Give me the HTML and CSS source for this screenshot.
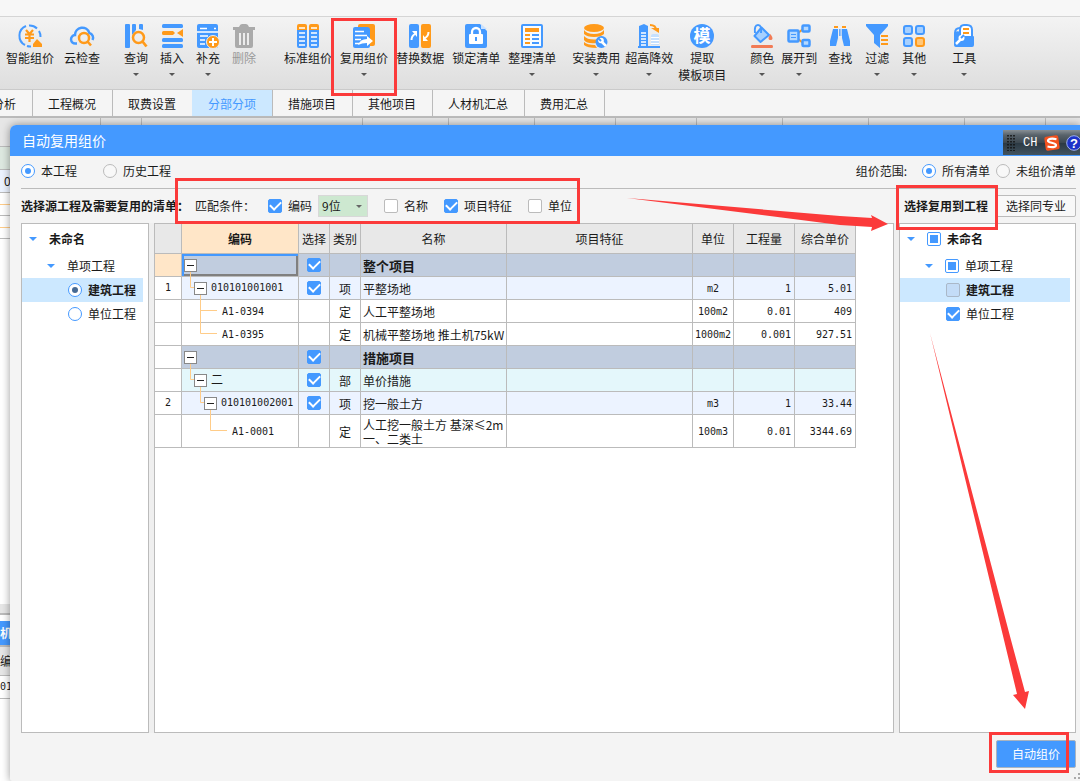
FILE: index.html
```html
<!DOCTYPE html>
<html lang="zh-CN">
<head>
<meta charset="utf-8">
<title>自动复用组价</title>
<link rel="stylesheet" href="styles.css">
</head>
<body>
<div class="app">
  <div class="topstrip"></div>
  <nav class="toolbar" aria-label="工具栏">
    <div class="group g-first">
      <button class="tool"><svg class="icon" viewBox="0 0 24 24"><g fill="none" stroke="#4499ff" stroke-width="2"><path d="M7 21a10.500 10.500 0 0 1 1-19"/><path d="M11 1.500a10.500 10.500 0 0 1 8 3"/><path d="M21 7a10.500 10.500 0 0 1 1.500 6"/><path d="M9 22a11 11 0 0 0 4 .5"/></g><path fill="none" stroke="#ff9a1a" stroke-width="2.200" d="M8 6l3.500 4L15 6M7 10.500h9M7 14h9M11.500 10v8"/><path fill="#ff9a1a" d="M19 15l5 5v3h-9v-3z"/></svg><span>智能组价</span></button>
      <button class="tool"><svg class="icon" viewBox="0 0 24 24"><path fill="none" stroke="#4499ff" stroke-width="2.500" d="M7 19.500H5.500a4.200 4.200 0 0 1-.5-8.400A7.300 7.300 0 0 1 19.300 9a4.800 4.800 0 0 1 3.200 7"/><circle cx="14" cy="14" r="5" fill="none" stroke="#ff9a1a" stroke-width="2.500"/><path stroke="#ff9a1a" stroke-width="2.500" d="M17.500 17.500l3.500 4"/></svg><span>云检查</span></button>
    </div>
    <div class="group g-edit">
      <button class="tool has-menu"><svg class="icon" viewBox="0 0 24 24"><path fill="#4499ff" d="M1 1q0-1 1-1h3q1 0 1 1v22q0 1-1 1H2q-1 0-1-1zM8 1q0-1 1-1h2q1 0 1 1v5l-4 5zM15 1q0-1 1-1h2q1 0 1 1v5l-4-1z"/><circle cx="14.500" cy="13.500" r="5.500" fill="none" stroke="#ff9a1a" stroke-width="2.500"/><path stroke="#ff9a1a" stroke-width="2.800" d="M18.500 17.500l4 5"/></svg><span>查询</span></button>
      <button class="tool has-menu"><svg class="icon" viewBox="0 0 24 24"><g fill="#4499ff"><rect x="2" width="21" height="4" rx="1.500"/><rect x="2" y="14" width="21" height="4" rx="1.500"/><rect x="2" y="20" width="21" height="4" rx="1.500"/></g><path fill="#ff9a1a" d="M2 8.500Q2 7 3.500 7H13l2 2-2 2H3.500Q2 11 2 9.500zM17 9l6-4v8z"/></svg><span>插入</span></button>
      <button class="tool has-menu"><svg class="icon" viewBox="0 0 24 24"><rect x="1" width="21" height="24" rx="2" fill="#4499ff"/><path stroke="#fff" stroke-width="1.500" d="M4 4.500h7M1 8h21M4 12h8M4 16h5M4 20h5"/><path stroke="#fff" stroke-width="1.500" d="M18 4.500h2"/><circle cx="17" cy="18" r="6.500" fill="#ff9a1a" stroke="#eee"/><path stroke="#fff" stroke-width="2" d="M13 18h8M17 14v8"/></svg><span>补充</span></button>
      <button class="tool" disabled><svg class="icon" viewBox="0 0 24 24"><path fill="#aaa" d="M1 3h6q1-3 3-3h4q2 0 3 3h6v3H1zM3 6h18v16q0 2-2 2H5q-2 0-2-2z"/><path fill="none" stroke="#ececec" stroke-width="2" d="M8 9v12M12 9v12M16 9v12"/></svg><span>删除</span></button>
    </div>
    <div class="group g-price">
      <button class="tool"><svg class="icon" viewBox="0 0 24 24"><path fill="#ff9a1a" d="M1 2q0-2 2-2h6q2 0 2 2v4H1zM13 2q0-2 2-2h6q2 0 2 2v4H13z"/><path fill="#4499ff" d="M1 6h10v16q0 2-2 2H3q-2 0-2-2zM13 6h10v16q0 2-2 2h-6q-2 0-2-2z"/><path stroke="#fff" stroke-width="1.500" d="M3 4h6M15 4h6M3 9h6M15 9h6M3 13h6M15 13h6M3 17h6M15 17h6M3 21h6M15 21h6"/></svg><span>标准组价</span></button>
      <button class="tool has-menu"><svg class="icon" viewBox="0 0 24 24"><rect x="6" width="17" height="22" rx="2" fill="#ff9a1a"/><path fill="#4499ff" d="M1 5q0-2 2-2h12q3 0 3 3v16q0 2-2 2H3q-2 0-2-2z"/><path stroke="#fff" stroke-width="1.700" d="M3 7.500h9M3 11.500h12M3 15.500h6M3 19.500h4"/><path fill="#fff" d="M6 21q2-6 9-6v-3l6 5-6 5v-3q-5 0-9 2z"/></svg><span>复用组价</span></button>
      <button class="tool"><svg class="icon" viewBox="0 0 24 24"><rect x="1" width="10" height="24" rx="2" fill="#4499ff"/><rect x="13" width="10" height="24" rx="2" fill="#ff9a1a"/><path fill="none" stroke="#fff" stroke-width="2" d="M3.500 16q0-4 3.500-6M20.500 8q0 4-3.500 6"/><path fill="#fff" d="M4 7h5v6zM20 17h-5v-6z"/></svg><span>替换数据</span></button>
      <button class="tool"><svg class="icon" viewBox="0 0 24 24"><path fill="#4499ff" d="M1 2q0-2 2-2h13l7 7v15q0 2-2 2H3q-2 0-2-2z"/><path fill="#c9e1ff" d="M17 0l6 5h-6z"/><rect x="5" y="10" width="14" height="10" rx="1" fill="#fff"/><path fill="none" stroke="#fff" stroke-width="2.300" d="M8 11V8a4 4 0 0 1 8 0v3"/><path stroke="#4499ff" stroke-width="2" d="M12 13v4"/></svg><span>锁定清单</span></button>
      <button class="tool has-menu"><svg class="icon" viewBox="0 0 24 24"><rect x="2" y="1" width="20" height="22" rx="1" fill="#f6fbff" stroke="#4499ff" stroke-width="2"/><path fill="#ff9a1a" d="M5 4h14v4H5z"/><path stroke="#ff9a1a" stroke-width="2" d="M5 11h5M5 15h5M5 19h5"/><path stroke="#4499ff" stroke-width="2" d="M12 11h7M12 15h7M12 19h7"/></svg><span>整理清单</span></button>
    </div>
    <div class="group g-fee">
      <button class="tool has-menu"><svg class="icon" viewBox="0 0 24 24"><g fill="#ff9a1a"><ellipse cx="10" cy="4" rx="10" ry="4"/><path d="M0 6q3 4 10 4t10-4v4q-3 3-10 3T0 10zM0 12q3 3.500 10 3.500 2 0 3-.5l-1 4q-9 1-12-3zM0 18q3 3 11 3l2 3Q3 24 0 21z"/></g><circle cx="17.500" cy="18" r="6" fill="#4499ff"/><path stroke="#fff" stroke-width="2.500" d="M17 17l5 5"/><circle cx="17" cy="16.500" r="2.800" fill="#fff"/><path stroke="#4499ff" stroke-width="2" d="M14 14l3 3"/></svg><span>安装费用</span></button>
      <button class="tool has-menu"><svg class="icon" viewBox="0 0 24 24"><path fill="#4499ff" d="M2 2l5-2 4 2v20h12v2H1v-2h1z"/><path stroke="#fff" stroke-width="1.300" d="M4 9h5M4 12h5M4 15h5M4 18h5M4 21h5"/><path fill="#c5e0ff" d="M14 12q0-2 2-2h4q2 0 2 2v9h-8z"/><path stroke="#fff" d="M14 13.500h8M14 16.500h8M14 19.500h8"/><path fill="none" stroke="#ff9a1a" stroke-width="2" d="M13 1q6 0 6 5"/><path fill="#ff9a1a" d="M14 4l8 0v5z"/></svg><span>超高降效</span></button>
      <button class="tool"><svg class="icon" viewBox="0 0 24 24"><circle cx="12" cy="12" r="12" fill="#4499ff"/><text x="12" y="18" text-anchor="middle" class="icon-text">模</text></svg><span>提取</span><span class="second">模板项目</span></button>
    </div>
    <div class="group g-color">
      <button class="tool has-menu"><svg class="icon" viewBox="0 0 24 24"><path fill="#a6d0ff" stroke="#4499ff" stroke-width="2" stroke-linejoin="round" d="M11.500 3.500l7.500 7.500-8.500 7-6-6z"/><path fill="none" stroke="#4499ff" stroke-width="2" d="M5 9Q4 1 8 1t3 8"/><path fill="#f27b55" d="M20.500 10q4 6 0 6t0-6zM2 21h20q1 0 1 1.500T22 24H2q-1 0-1-1.500T2 21z"/></svg><span>颜色</span></button>
      <button class="tool has-menu"><svg class="icon" viewBox="0 0 24 24"><path fill="none" stroke="#ff9a1a" stroke-width="2" d="M10 10l6-5M10 14l6 5"/><g fill="#b5d9ff" stroke="#4499ff" stroke-width="2.500"><rect x="1.500" y="6.500" width="10" height="11" rx="1"/><rect x="15.500" y="1.500" width="7" height="6" rx="1"/><rect x="15.500" y="16" width="7" height="6" rx="1"/></g><path stroke="#4499ff" d="M4 10.500h5M4 13.500h5"/></svg><span>展开到</span></button>
    </div>
    <div class="group g-find">
      <button class="tool"><svg class="icon" viewBox="0 0 24 24"><path fill="#ff9a1a" d="M6 2h4v2H6zM14 2h4v2h-4z"/><path fill="#4499ff" d="M5 5h5v9l-2 8H2v-5zM14 5h5l3 12v5h-6l-2-8zM11 5h.8v7H11zM12.500 5h.8v7h-.8z"/></svg><span>查找</span></button>
      <button class="tool has-menu"><svg class="icon" viewBox="0 0 24 24"><path fill="#4499ff" d="M1 0h22v2l-8 9v13l-6-5v-8L1 2z"/><path stroke="#ff9a1a" stroke-width="2" d="M16 12h7M16 16h7M16 20h7"/></svg><span>过滤</span></button>
      <button class="tool has-menu"><svg class="icon" viewBox="0 0 24 24"><g fill="#a6d0ff" stroke="#4499ff" stroke-width="2"><rect x="2" y="2" width="8" height="8" rx="2"/><rect x="14" y="2" width="8" height="8" rx="2"/><rect x="2" y="14" width="8" height="8" rx="2"/><rect x="14" y="14" width="8" height="8" rx="2" fill="#ffc77a" stroke="#ff9a1a"/></g></svg><span>其他</span></button>
    </div>
    <div class="group g-tools">
      <button class="tool has-menu"><svg class="icon" viewBox="0 0 24 24"><path fill="#fff" stroke="#4499ff" stroke-width="2" d="M8 6q0-5 4-5h3q5 0 5 5v7H8z"/><path fill="none" stroke="#4499ff" stroke-width="2" d="M8 4q-5 0-5 5"/><path fill="#4499ff" d="M2 9q2-3 7-1v4h12q1 0 1 1v8q0 2-2 2H4q-2 0-2-2z"/><path stroke="#ff9a1a" stroke-width="2" d="M11 5h6M11 9h6"/><path stroke="#fff" stroke-width="2.500" d="M4 20l5-5"/><circle cx="9.500" cy="14" r="3" fill="#fff"/><path stroke="#4499ff" stroke-width="2" d="M12 11l-3 3"/></svg><span>工具</span></button>
    </div>
  </nav>
  <nav class="tabs" aria-label="页签">
    <a href="#analysis" class="tab">分析</a><a href="#overview" class="tab">工程概况</a><a href="#fees" class="tab">取费设置</a><a href="#items" class="tab current">分部分项</a><a href="#measures" class="tab">措施项目</a><a href="#others" class="tab">其他项目</a><a href="#labor" class="tab">人材机汇总</a><a href="#summary" class="tab">费用汇总</a>
  </nav>
  <main class="workspace">
    <div class="sheet-head"><i class="c101"></i><i class="c41"></i><i class="c221"></i><i class="c86"></i><i class="c86"></i><i class="c81"></i><i class="c81"></i><i class="c86"></i><i class="c86"></i><i class="c96"></i><i class="c81"></i></div>
    <div class="line green"></div>
    <div class="line pale"><span>0</span></div>
    <div class="line branch"></div>
    <div class="line branch"></div>
    <div class="gap"></div>
    <div class="splitter"></div>
    <div class="lower-tab">机</div>
    <div class="lower-head">编</div>
    <div class="line code">01</div>
    <div class="rest"></div>
  </main>

  <section class="dialog" role="dialog" aria-label="自动复用组价">
    <header class="titlebar"><h1>自动复用组价</h1></header>
    <div class="ime">
      <svg class="ime-grip" viewBox="0 0 10 18"><path stroke="#111" stroke-width="1.500" stroke-dasharray="1.500 1.500" d="M1 1v16M4 1v16M7 1v16"/></svg>
      <span>CH</span>
      <svg class="ime-logo" viewBox="0 0 16 16"><rect x="1" y="1" width="14" height="14" rx="2" fill="#f4511e" transform="rotate(-8 8 8)"/><path fill="none" stroke="#fff" stroke-width="2.200" d="M12.500 4.200C7 3 4 4 4 6s8 1.500 8 4-4 2.500-8.500 1.500"/></svg>
      <svg class="ime-help" viewBox="0 0 16 16"><circle cx="8" cy="8" r="7.300" fill="#1c32c8" stroke="#9eb0f0"/><text x="8" y="13" text-anchor="middle" class="help-text">?</text></svg>
    </div>
    <div class="scope">
      <label><input type="radio" name="source" checked>本工程</label>
      <label class="second-radio"><input type="radio" name="source">历史工程</label>
      <div class="range"><span>组价范围:</span>
        <label><input type="radio" name="range" checked>所有清单</label>
        <label><input type="radio" name="range">未组价清单</label>
      </div>
    </div>
    <div class="filter">
      <strong class="caption">选择源工程及需要复用的清单：</strong>
      <span class="match">匹配条件：</span>
      <label><input type="checkbox" checked>编码</label>
      <span class="select"><select aria-label="编码位数"><option>9位</option></select></span>
      <label class="opt"><input type="checkbox">名称</label>
      <label class="opt"><input type="checkbox" checked>项目特征</label>
      <label class="opt"><input type="checkbox">单位</label>
      <div class="target"><strong>选择复用到工程</strong><button class="plain">选择同专业</button></div>
    </div>
    <div class="panes">
      <div class="pane tree">
        <div class="node top"><i class="caret"></i><b>未命名</b></div>
        <div class="node l2"><i class="caret"></i><span>单项工程</span></div>
        <label class="node l3 selected"><input type="radio" name="unit" checked><b>建筑工程</b></label>
        <label class="node l3"><input type="radio" name="unit" class="blue"><span>单位工程</span></label>
      </div>
      <div class="pane">
        <table>
          <colgroup><col class="w-no"><col class="w-code"><col class="w-sm"><col class="w-sm"><col class="w-name"><col class="w-feat"><col class="w-unit"><col class="w-num"><col class="w-num"></colgroup>
          <thead><tr><th></th><th class="active">编码</th><th>选择</th><th>类别</th><th>名称</th><th>项目特征</th><th>单位</th><th>工程量</th><th>综合单价</th></tr></thead>
          <tbody>
            <tr class="section"><td class="marker"></td><td class="code focus"><svg class="wires" viewBox="0 0 60 23"><path d="M8.500 17v6"/></svg><div class="d1"><button class="fold" aria-label="折叠"></button></div></td><td><input type="checkbox" checked aria-label="选择"></td><td></td><td class="name">整个项目</td><td></td><td></td><td></td><td></td></tr>
            <tr class="item"><td class="no">1</td><td class="code"><svg class="wires" viewBox="0 0 60 23"><path d="M8.500 0v10.500H12M18.500 17v6"/></svg><div class="d2"><button class="fold" aria-label="折叠"></button>010101001001</div></td><td><input type="checkbox" checked aria-label="选择"></td><td class="kind">项</td><td class="name">平整场地</td><td></td><td class="unit">m2</td><td class="num">1</td><td class="num">5.01</td></tr>
            <tr><td></td><td class="code"><svg class="wires" viewBox="0 0 60 23"><path d="M18.500 0v23M18.500 10.500H35"/></svg><div class="leaf">A1-0394</div></td><td></td><td class="kind">定</td><td class="name">人工平整场地</td><td></td><td class="unit">100m2</td><td class="num">0.01</td><td class="num">409</td></tr>
            <tr><td></td><td class="code"><svg class="wires" viewBox="0 0 60 23"><path d="M18.500 0v10.500H35"/></svg><div class="leaf">A1-0395</div></td><td></td><td class="kind">定</td><td class="name">机械平整场地 推土机75kW</td><td></td><td class="unit">1000m2</td><td class="num">0.001</td><td class="num">927.51</td></tr>
            <tr class="section"><td class="no"></td><td class="code"><svg class="wires" viewBox="0 0 60 23"><path d="M8.500 17v6"/></svg><div class="d1"><button class="fold" aria-label="折叠"></button></div></td><td><input type="checkbox" checked aria-label="选择"></td><td></td><td class="name">措施项目</td><td></td><td></td><td></td><td></td></tr>
            <tr class="part"><td class="no"></td><td class="code"><svg class="wires" viewBox="0 0 60 23"><path d="M8.500 0v10.500H12M18.500 17v6"/></svg><div class="d2"><button class="fold" aria-label="折叠"></button><span class="han">二</span></div></td><td><input type="checkbox" checked aria-label="选择"></td><td class="kind">部</td><td class="name">单价措施</td><td></td><td></td><td></td><td></td></tr>
            <tr class="item"><td class="no">2</td><td class="code"><svg class="wires" viewBox="0 0 60 23"><path d="M18.500 0v10.500H22M28.500 17v6"/></svg><div class="d3"><button class="fold" aria-label="折叠"></button>010101002001</div></td><td><input type="checkbox" checked aria-label="选择"></td><td class="kind">项</td><td class="name">挖一般土方</td><td></td><td class="unit">m3</td><td class="num">1</td><td class="num">33.44</td></tr>
            <tr class="tall"><td></td><td class="code"><svg class="wires" viewBox="0 0 60 23"><path d="M28.500 0v15.500H45"/></svg><div class="leaf deep">A1-0001</div></td><td></td><td class="kind">定</td><td class="name">人工挖一般土方 基深≤2m 一、二类土</td><td></td><td class="unit">100m3</td><td class="num">0.01</td><td class="num">3344.69</td></tr>
          </tbody>
        </table>
      </div>
      <div class="pane tree">
        <div class="node top"><i class="caret"></i><label><input type="checkbox" class="partial"><b>未命名</b></label></div>
        <div class="node l2"><i class="caret"></i><label><input type="checkbox" class="partial"><span>单项工程</span></label></div>
        <label class="node l3 selected"><input type="checkbox" class="ghost"><b>建筑工程</b></label>
        <label class="node l3"><input type="checkbox" checked><span>单位工程</span></label>
      </div>
    </div>
    <footer class="actions"><button class="primary">自动组价</button></footer>
    <svg class="grip" viewBox="0 0 6 6"><path fill="#aaa" d="M4 0h2v2H4zM0 4h2v2H0zM4 4h2v2H4z"/></svg>
  </section>

  <svg class="marks" width="1080" height="781" viewBox="0 0 1080 781" aria-hidden="true">
    <g fill="none" stroke="#fb3a3a" stroke-width="3"><rect x="332.500" y="19.500" width="63" height="75"/><rect x="176.500" y="179.500" width="402" height="43"/><rect x="897.500" y="186.500" width="99" height="42"/><rect x="990.500" y="733.500" width="77" height="38"/></g>
    <g fill="#fb3a3a"><path d="M627 198L840 216 872 218 871 215 888 224 871 231 872 227 840 225z"/><path d="M930 333L1011 640 1025 692 1029 691 1025 709 1013 695 1017 694 1004 640z"/></g>
  </svg>
</div>
</body>
</html>
```
FILE: styles.css
```css
* { box-sizing: border-box; }

body {
  margin: 0;
  font-family: "Noto Sans CJK SC", sans-serif;
  font-size: 12px;
  line-height: 16px;
  color: #1a1a1a;
  overflow: hidden;
}

button, select, input { font: inherit; color: inherit; margin: 0; }

.app {
  position: relative;
  display: flex;
  flex-direction: column;
  min-height: 100vh;
  background: #f5f5f5;
  overflow: hidden;
}

.topstrip { height: 17px; background: #f7f7f7; border-bottom: 1px solid #d5d5d5; }

/* Toolbar */
.toolbar {
  display: flex;
  height: 73px;
  padding: 7px 6px 0;
  background: linear-gradient(#f3f3f3, #dedede);
  border-bottom: 1px solid #cacaca;
}
.group { display: flex; flex: none; align-items: flex-start; }
.g-first { gap: 10px; }
.g-edit { gap: 12px; margin-left: 24px; }
.g-price { gap: 8px; margin-left: 28px; }
.g-fee { gap: 5px; margin-left: 16px; }
.g-color { gap: 7px; margin-left: 24px; }
.g-find { gap: 13px; margin-left: 11px; }
.g-tools { margin-left: 26px; }
.tool {
  display: flex;
  flex-direction: column;
  align-items: center;
  padding: 0;
  border: 0;
  background: none;
  white-space: nowrap;
}
.tool span { margin-top: 2px; }
.tool .second { margin-top: 1px; }
.tool:disabled { color: #999; }
.icon { width: 24px; height: 24px; overflow: visible; }
.icon-text { font-size: 17px; font-weight: bold; fill: #fff; }
.has-menu::after {
  content: "";
  margin-top: 7px;
  border: 3px solid transparent;
  border-top-color: #555;
  border-bottom: 0;
}

/* Page tabs */
.tabs { display: flex; height: 28px; margin-left: -24px; border-bottom: 2px solid #bbb; }
.tab {
  padding: 6px 16px 0;
  border-right: 1px solid #bbb;
  box-sizing: content-box;
  margin-right: -1px;
  color: #1a1a1a;
  text-decoration: none;
}
.tab.current { background: #cce8ff; color: #4499ff; }

/* Sheet behind the dialog */
.workspace { flex: 1; display: flex; flex-direction: column; background: #fff; }
.sheet-head { display: flex; height: 29px; background: #e6e6e6; border-bottom: 1px solid #bbb; }
.sheet-head i { border-right: 1px solid #bbb; flex: none; }
.c101 { width: 101px; }
.c41 { width: 41px; }
.c221 { width: 221px; }
.c86 { width: 86px; }
.c81 { width: 81px; }
.c96 { width: 96px; }
.line { height: 23px; border-bottom: 1px solid #bbb; padding-top: 3px; }
.green { background: #dde8e0; }
.pale { background: #ecf3ff; padding-left: 4px; }
.branch { background: linear-gradient(#fc8, #fc8) 0 11px / 100% 1px no-repeat; }
.gap { height: 365px; }
.splitter { height: 11px; background: #e6e6e6; border-bottom: 2px solid #bbb; margin-bottom: 6px; }
.lower-tab { height: 24px; padding-top: 4px; background: #4499ff; color: #fff; font-weight: bold; }
.lower-head { height: 31px; padding-top: 6px; background: #e6e6e6; border-top: 2px solid #bbb; border-bottom: 1px solid #bbb; }
.code { font-family: "DejaVu Sans Mono", "Noto Sans CJK SC", monospace; font-size: 10px; }

/* Dialog window */
.dialog {
  position: absolute;
  inset: 125px 0 0 10px;
  display: flex;
  flex-direction: column;
  background: #f4f4f4;
  border-radius: 6px 0 0 2px;
  box-shadow: 0 0 8px rgba(0, 0, 0, 0.4);
}
.titlebar { height: 31px; padding: 6px 12px; background: #4499ff; border-radius: 6px 0 0 0; color: #fff; }
.titlebar h1 { margin: 0; font-size: 14px; line-height: 19px; font-weight: normal; }

.ime {
  position: absolute;
  top: 5px;
  right: 0;
  width: 77px;
  height: 25px;
  padding-left: 4px;
  display: flex;
  align-items: center;
  overflow: hidden;
  background: linear-gradient(#888f94, #59636b 20%, #3d4850 50%, #2b3842 51%, #42535e);
  color: #fff;
  font-family: "Liberation Mono", monospace;
}
.ime > * { flex: none; }
.ime-grip { width: 10px; height: 18px; margin-right: 6px; }
.ime-logo { width: 16px; height: 16px; margin-left: 7px; }
.ime-help { width: 16px; height: 16px; margin-left: 6px; }
.help-text { font: bold 13px "Liberation Sans", sans-serif; fill: #fff; }

label { display: flex; align-items: center; white-space: nowrap; }

input[type="radio"], input[type="checkbox"] {
  appearance: none;
  flex: none;
  width: 14px;
  height: 14px;
  margin-right: 6px;
  background: #fff;
  border: 1px solid #bbb;
  display: grid;
  place-items: center;
}
input[type="radio"] { border-radius: 50%; background: #f8f8f8; }
input[type="radio"]:checked, input.blue, input.partial { border-color: #4499ff; background: #fff; }
input[type="radio"]:checked::before { content: ""; width: 6px; height: 6px; border-radius: 50%; background: #4499ff; }
input[type="checkbox"] { border-radius: 2px; }
input[type="checkbox"]:checked { background: #4499ff; border-color: #4499ff; }
input[type="checkbox"]:checked::before {
  content: "";
  width: 9px;
  height: 5px;
  border: solid #fff;
  border-width: 0 0 2px 2px;
  transform: translateY(-2px) rotate(-45deg);
}
input.partial::before { content: ""; width: 8px; height: 8px; background: #4499ff; }
input.ghost { background: #c3dcf7; border-color: #aab8c8; }

.scope {
  display: flex;
  height: 33px;
  margin: 0 4px 0 11px;
  padding-bottom: 2px;
  align-items: center;
  border-bottom: 1px solid #bbb;
}
.second-radio { margin-left: 26px; }
.range { display: flex; align-items: center; gap: 6px; margin-left: auto; }
.range span { margin-right: 9px; }

.filter { display: flex; align-items: center; height: 34px; padding: 0 4px 0 11px; }
.caption { width: 174px; }
.match { width: 73px; }
.select { display: flex; position: relative; margin-left: 6px; }
.select select {
  appearance: none;
  width: 50px;
  height: 22px;
  padding: 0 3px;
  border: 1px solid #d8d8d8;
  border-radius: 0;
  background: #cde8d0;
}
.select::after {
  content: "";
  position: absolute;
  right: 6px;
  top: 10px;
  border: 3px solid transparent;
  border-top-color: #666;
  border-bottom: 0;
  pointer-events: none;
}
.opt { margin-left: 16px; }
.target { display: flex; align-items: center; gap: 8px; margin-left: auto; }
.plain { width: 80px; height: 22px; padding: 0; border: 1px solid #bbb; border-radius: 2px; background: #f8f8f8; }

.panes {
  flex: 1;
  display: grid;
  grid-template-columns: 128px minmax(0, 1fr) 177px;
  gap: 5px;
  margin: 0 4px 0 11px;
  background: #efefef;
}
.pane { background: #fff; border: 1px solid #bbb; overflow: hidden; }

/* Project trees */
.node { display: flex; align-items: center; height: 24px; padding-left: 7px; margin-right: 5px; }
.node.top { height: 30px; }
.node.l2 { padding-left: 25px; }
.node.l3 { padding-left: 46px; }
.node.selected { background: #cce8ff; }
.node.selected input[type="radio"]::before { background: #466a94; }
.caret {
  margin-right: 12px;
  border: 4px solid transparent;
  border-top-color: #4499ff;
  border-bottom: 0;
}

/* Bill table */
table { width: 701px; border-spacing: 0; table-layout: fixed; }
.w-no { width: 27px; }
.w-code { width: 117px; }
.w-sm { width: 31px; }
.w-name { width: 146px; }
.w-feat { width: 186px; }
.w-unit { width: 41px; }
.w-num { width: 61px; }
th, td { padding: 0; border: solid #bbb; border-width: 0 1px 1px 0; text-align: center; }
th { height: 30px; background: #e8e8e8; font-weight: normal; }
th.active { background: #ffe6c8; font-weight: bold; }
td { height: 23px; line-height: 14px; }
.section td { background: #c1cddf; }
.section .name { font-weight: bold; font-size: 13px; }
.item td { background: #ecf3ff; }
.part td { background: #e4f7fb; }
tr td.no { background: #fff; }
tr td.marker { background: #ffe6c8; }
.kind, td.name { padding-top: 2px; }
td.name { text-align: left; padding-left: 2px; }
.no, .unit, .num { font-family: "DejaVu Sans Mono", monospace; font-size: 10px; }
.unit, .num { padding-top: 2px; }
td.num { text-align: right; padding-right: 3px; }
td input[type="checkbox"] { margin: 0 auto; }
.tall td { height: 33px; }
td.code { position: relative; text-align: left; }
td.focus { box-shadow: inset 2px 2px #4499ff, inset -2px -2px #808080; }
.wires { position: absolute; left: 0; top: 0; width: 60px; height: 23px; fill: none; stroke: #fc8; }
.code div { display: flex; align-items: center; position: relative; }
.d1 { padding-left: 2px; }
.d2 { padding-left: 12px; }
.d3 { padding-left: 22px; }
.leaf { padding: 2px 0 0 40px; }
.deep { padding-left: 50px; }
.han { font-size: 12px; }
.fold {
  display: grid;
  place-items: center;
  width: 13px;
  height: 13px;
  margin-right: 4px;
  padding: 0;
  border: 1px solid #888;
  background: #fff;
}
.fold::before { content: ""; width: 7px; height: 1px; background: #222; }

.actions { display: flex; justify-content: flex-end; height: 48px; padding: 7px 4px 0; }
.primary { width: 80px; height: 28px; padding: 0; border: 1px solid #aab4c0; border-radius: 2px; background: #4499ff; color: #fff; }
.grip { position: absolute; right: 0; bottom: 2px; width: 6px; height: 6px; }

.marks { position: absolute; left: 0; top: 0; pointer-events: none; }
```
